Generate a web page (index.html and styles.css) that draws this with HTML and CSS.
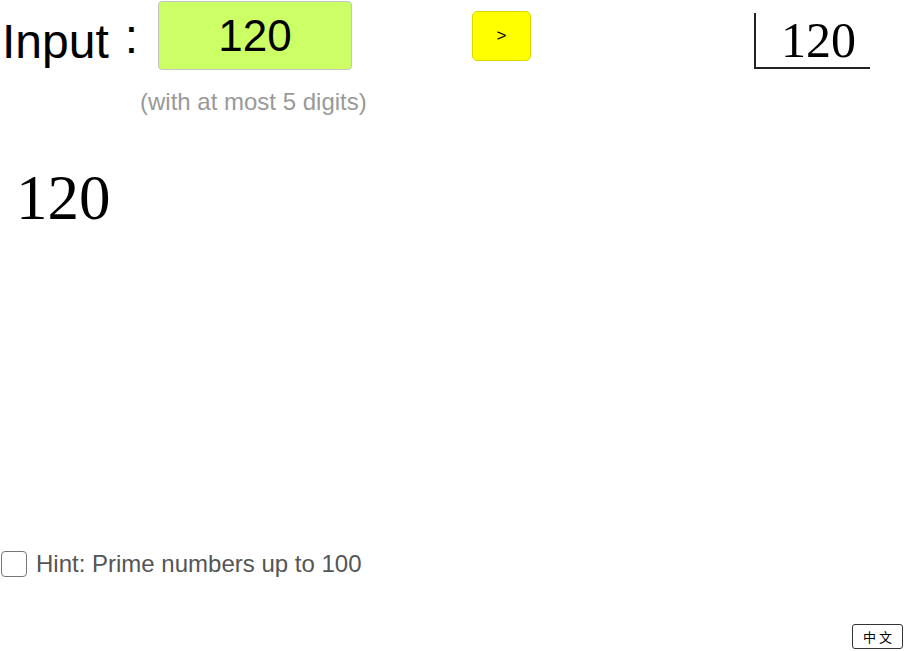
FILE: index.html
```html
<!DOCTYPE html>
<html>
<head>
<meta charset="utf-8">
<link rel="stylesheet" href="styles.css">
</head>
<body>
<div class="app">
  <div class="top">
    <div class="label">Input<span class="colon">:</span></div>
    <div class="field">120</div>
    <button class="go">&gt;</button>
    <div class="division"><span>120</span></div>
  </div>
  <div class="note">(with at most 5 digits)</div>
  <div class="big">120</div>
  <label class="hint-row"><span class="box"></span><span class="hint-text">Hint: Prime numbers up to 100</span></label>
  <div class="footer"><button class="lang">中文</button></div>
</div>
</body>
</html>
```
FILE: styles.css
```css
html, body { margin: 0; padding: 0; background: #fff; }
body { font-family: "Liberation Sans", Arial, sans-serif; }
.app { width: 904px; height: 651px; display: flex; flex-direction: column; overflow: hidden; }
.top { display: flex; align-items: flex-start; height: 70px; }
.label { flex: none; width: 156px; margin: 13px 0 0 2px; font-size: 48px; line-height: 48px; color: #000; white-space: nowrap; }
.colon { display: inline-block; margin-left: 16px; vertical-align: 5px; }
.field { flex: none; box-sizing: border-box; width: 194px; height: 69px; margin-top: 1px; background: #ccff66; border: 1px solid #c4c4c4; border-radius: 4px; font-size: 44px; line-height: 67px; text-align: center; color: #000; }
.go { flex: none; box-sizing: border-box; width: 59px; height: 50px; margin: 11px 0 0 120px; background: #ffff00; border: 1px solid #d9d900; border-radius: 5px; font-family: "Liberation Sans", Arial, sans-serif; font-size: 17px; color: #000; padding: 0; }
.division { flex: none; box-sizing: border-box; width: 116px; height: 56px; margin: 13px 0 0 223px; border-left: 2px solid #222; border-bottom: 2px solid #222; font-family: "Liberation Serif", serif; font-size: 50px; line-height: 50px; padding: 2px 0 0 25px; color: #000; }
.note { margin: 20px 0 0 140px; font-size: 24px; line-height: 24px; color: #999; }
.big { margin: 53px 0 0 16px; font-family: "Liberation Serif", serif; font-size: 63px; line-height: 63px; color: #000; }
.hint-row { display: flex; align-items: center; margin: 321px 0 0 1px; height: 26px; }
.box { box-sizing: border-box; width: 26px; height: 26px; border: 1.5px solid #777; border-radius: 4px; background: #fff; }
.hint-text { margin-left: 9px; font-size: 24px; line-height: 26px; color: #555; }
.footer { display: flex; justify-content: flex-end; margin-top: 47px; padding-right: 1px; }
.lang { box-sizing: border-box; width: 51px; height: 25px; padding: 0; background: #fff; border: 1px solid #333; border-radius: 3px; font-family: "Noto Sans CJK TC", sans-serif; font-size: 13px; color: #000; letter-spacing: 3px; text-indent: 3px; }
```
